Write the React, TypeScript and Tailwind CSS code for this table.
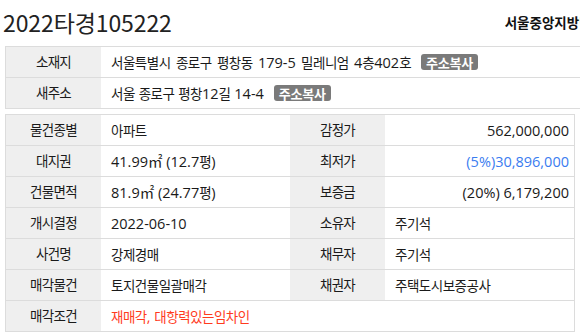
import React from 'react';

const font = "font-['Open_Sans','Noto_Sans_CJK_KR',sans-serif]";

// Hangul is set a touch smaller than digits to match the reference's font metrics
const Mixed = ({ text, className = '' }: { text: string; className?: string }) => {
  const runs = text.match(/[\uac00-\ud7a3]+|[^\uac00-\ud7a3]+/g) || [];
  return (
    <span className={className}>
      {runs.map((r, i) =>
        /[\uac00-\ud7a3]/.test(r) ? (
          <span key={i} className="text-[13.5px] tracking-[-0.5px]">
            {r}
          </span>
        ) : (
          <span key={i} className="text-[14.5px]">
            {r}
          </span>
        )
      )}
    </span>
  );
};

const Label = ({ children }: { children: React.ReactNode }) => (
  <div className="flex items-center justify-center bg-[#efefef] text-[13.5px] text-[#1a1a1a] tracking-[-0.7px]">
    {children}
  </div>
);

const Value = ({
  children,
  className = '',
}: {
  children: React.ReactNode;
  className?: string;
}) => (
  <div className={`flex items-center pl-[10px] pr-[5px] ${className}`}>{children}</div>
);

const CopyBadge = () => (
  <span className="ml-[10px] inline-flex h-[16px] items-center rounded-[3px] bg-[#7a7a7a] px-[5px] text-[13px] font-bold leading-none text-white tracking-[-0.2px] font-['Noto_Sans_CJK_KR',sans-serif]">
    주소복사
  </span>
);

const rows: [string, string, string, string, boolean?, string?][] = [
  ['물건종별', '아파트', '감정가', '562,000,000', true],
  ['대지권', '41.99㎡ (12.7평)', '최저가', '(5%)30,896,000', true, 'text-[#3a7cf0]'],
  ['건물면적', '81.9㎡ (24.77평)', '보증금', '(20%) 6,179,200', true],
  ['개시결정', '2022-06-10', '소유자', '주기석'],
  ['사건명', '강제경매', '채무자', '주기석'],
  ['매각물건', '토지건물일괄매각', '채권자', '주택도시보증공사'],
];

export default function App() {
  return (
    <div className={`h-[333px] w-[580px] overflow-hidden bg-white text-[#1a1a1a] ${font}`}>
      <div className="w-[620px] pl-[5px]">
        {/* Header */}
        <div className="flex h-[46px] items-center justify-between pb-[2px]">
          <h1 className="-ml-[2px] text-[23px] font-normal tracking-[-0.1px] text-[#222] font-['Noto_Sans_CJK_KR',sans-serif]">
            2022타경105222
          </h1>
          <span className="pr-[16px] text-[13.5px] font-bold text-[#111] font-['Noto_Sans_CJK_KR',sans-serif]">
            서울중앙지방법원
          </span>
        </div>

        {/* Address table */}
        <div className="border-l border-t border-[#dcdcdc]">
          <div className="grid h-[31px] grid-cols-[95px_1fr] border-b border-[#dcdcdc]">
            <Label>소재지</Label>
            <Value>
              <Mixed text="서울특별시 종로구 평창동 179-5 밀레니엄 4층402호" className="[word-spacing:1.5px]" />
              <CopyBadge />
            </Value>
          </div>
          <div className="grid h-[31px] grid-cols-[95px_1fr] border-b border-[#dcdcdc]">
            <Label>새주소</Label>
            <Value>
              <Mixed text="서울 종로구 평창12길 14-4" />
              <CopyBadge />
            </Value>
          </div>
        </div>

        {/* Detail table */}
        <div className="mt-[5px] w-[570px] border-x border-t border-[#dcdcdc]">
          {rows.map(([l1, v1, l2, v2, right, color]) => (
            <div
              key={l1}
              className="grid h-[31px] grid-cols-[95px_189px_95px_1fr] border-b border-[#dcdcdc]"
            >
              <Label>{l1}</Label>
              <Value>
                <Mixed text={v1} />
              </Value>
              <Label>{l2}</Label>
              <Value className={right ? 'justify-end' : ''}>
                <Mixed text={v2} className={color ?? ''} />
              </Value>
            </div>
          ))}
          <div className="grid h-[31px] grid-cols-[95px_1fr] border-b border-[#dcdcdc]">
            <Label>매각조건</Label>
            <Value>
              <Mixed text="재매각, 대항력있는임차인" className="text-[#ff3b1d]" />
            </Value>
          </div>
        </div>
      </div>
    </div>
  );
}
